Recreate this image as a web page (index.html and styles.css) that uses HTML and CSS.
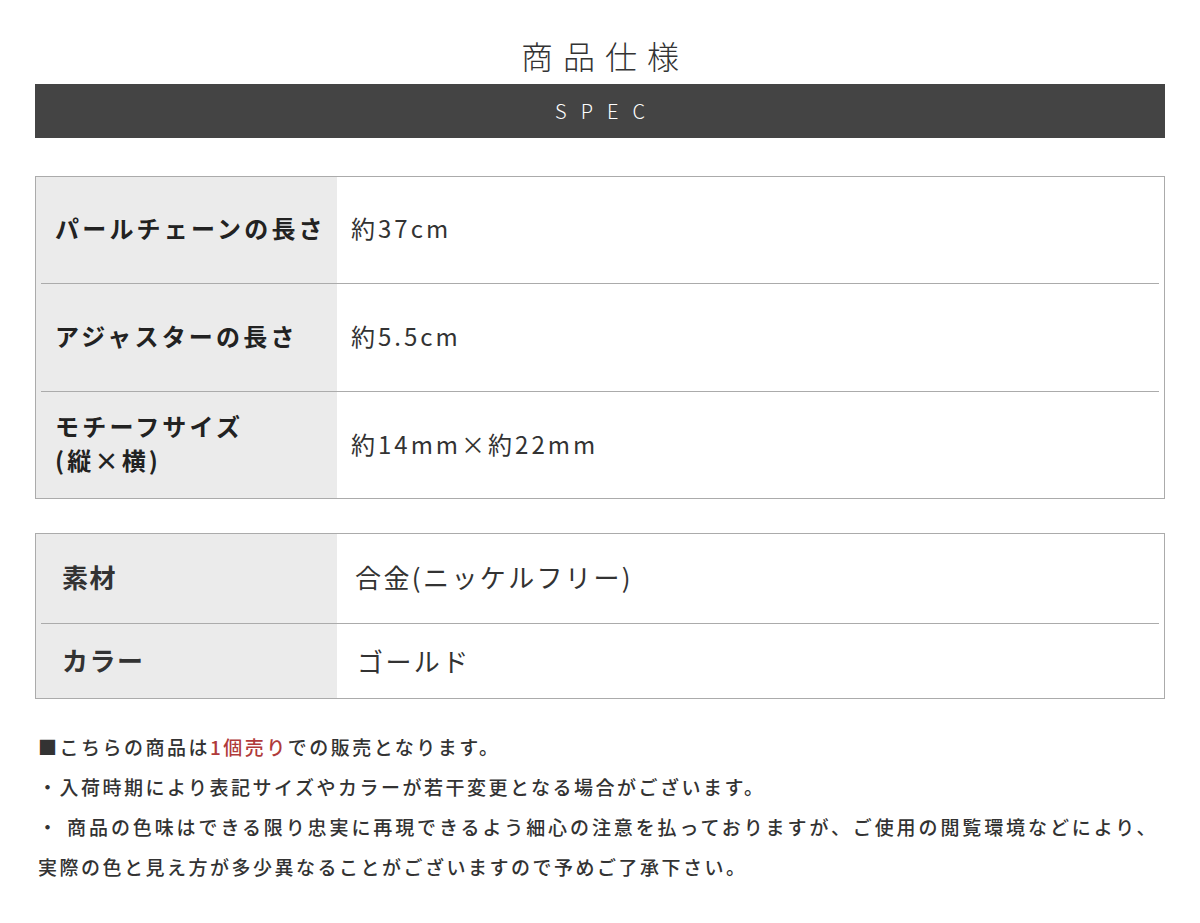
FILE: index.html
```html
<!DOCTYPE html>
<html lang="ja">
<head>
<meta charset="utf-8">
<title>商品仕様</title>
<link rel="stylesheet" href="styles.css">
</head>
<body>
<div class="page">
  <h1 class="title">商品仕様</h1>
  <div class="bar">SPEC</div>

  <div class="spec spec-size">
    <div class="row r1">
      <div class="th">パールチェーンの長さ</div>
      <div class="td">約37cm</div>
    </div>
    <div class="row r2">
      <div class="th">アジャスターの長さ</div>
      <div class="td">約5.5cm</div>
    </div>
    <div class="row r3">
      <div class="th">モチーフサイズ<br>(縦×横)</div>
      <div class="td">約14mm×約22mm</div>
    </div>
  </div>

  <div class="spec spec-mat">
    <div class="row m1">
      <div class="th">素材</div>
      <div class="td">合金(ニッケルフリー)</div>
    </div>
    <div class="row m2">
      <div class="th">カラー</div>
      <div class="td">ゴールド</div>
    </div>
  </div>

  <div class="notes">
    <p class="line">■こちらの商品は<span class="red">1個売り</span>での販売となります。</p>
    <p class="line">・入荷時期により表記サイズやカラーが若干変更となる場合がございます。</p>
    <p class="line line-wide">・ 商品の色味はできる限り忠実に再現できるよう細心の注意を払っておりますが、ご使用の閲覧環境などにより、</p>
    <p class="line">実際の色と見え方が多少異なることがございますので予めご了承下さい。</p>
  </div>
</div>
</body>
</html>
```

FILE: styles.css
```css
* { box-sizing: border-box; }
html, body { margin: 0; padding: 0; background: #fff; }
body {
  font-family: "Noto Sans CJK JP", "Noto Sans", sans-serif;
  color: #333;
}
.page {
  margin: 0 35px;
  width: 1130px;
}
.title {
  margin: 0;
  padding-top: 32px;
  padding-left: 10px;
  height: 84px;
  line-height: 46px;
  text-align: center;
  font-size: 32px;
  font-weight: 300;
  letter-spacing: 10px;
  color: #333;
}
.bar {
  height: 54px;
  background: #444;
  color: #fff;
  text-align: center;
  line-height: 54px;
  font-size: 20px;
  font-weight: 300;
  letter-spacing: 14px;
  padding-left: 14px;
}
.spec {
  border: 1px solid #ababab;
  background: linear-gradient(to right, #ebebeb 0, #ebebeb 301px, #fff 301px);
}
.spec-size { margin-top: 38px; }
.spec-mat { margin-top: 34px; }
.row {
  display: flex;
  align-items: center;
  margin: 0 5px;
  border-bottom: 1px solid #ababab;
}
.row:last-child { border-bottom: none; }
.r1 { height: 107px; padding-bottom: 5px; }
.r2 { height: 108px; padding-bottom: 4px; }
.r3 { height: 106px; padding-bottom: 4px; }
.m1 { height: 90px; padding-bottom: 4px; }
.m2 { height: 74px; padding-bottom: 2px; }
.th {
  width: 296px;
  flex: none;
  padding-left: 14px;
  font-size: 24px;
  font-weight: 700;
  letter-spacing: 3.2px;
  line-height: 34px;
  color: #222;
}
.td {
  padding-left: 14px;
  font-size: 24px;
  letter-spacing: 3px;
  color: #333;
}
.spec-mat .th {
  padding-left: 21px;
  font-size: 26px;
  letter-spacing: 1.5px;
  color: #333;
}
.spec-mat .td {
  padding-left: 18px;
  font-size: 26px;
  letter-spacing: 2.4px;
}
.spec-mat .m2 .td { padding-left: 20px; }
.notes {
  margin-top: 28px;
  padding-left: 3px;
}
.line {
  margin: 0;
  font-size: 19px;
  font-weight: 500;
  letter-spacing: 2.5px;
  line-height: 40px;
  white-space: nowrap;
  color: #333;
}
.line-wide { letter-spacing: 2.9px; }
.red { color: #b03a3a; }
```
